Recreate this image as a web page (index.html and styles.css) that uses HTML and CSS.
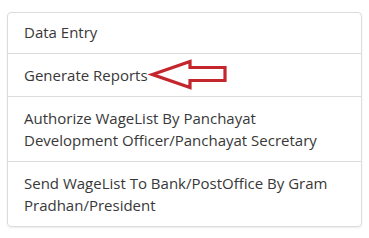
FILE: index.html
```html
<!DOCTYPE html>
<html>
<head>
<meta charset="utf-8">
<link rel="stylesheet" href="styles.css">
</head>
<body>
<div class="list">
  <div class="item">Data Entry</div>
  <div class="item item-mark">Generate Reports
    <svg class="arrow" width="80" height="34" viewBox="148 58 80 34">
      <path d="M152.5,74.5 L190,61.5 L190,67.5 L225,67.5 L225,80.5 L190,80.5 L190,87.5 Z" fill="#fff" stroke="#c4262e" stroke-width="3.2" stroke-linejoin="miter"/>
    </svg>
  </div>
  <div class="item item-2">Authorize WageList By Panchayat Development Officer/Panchayat Secretary</div>
  <div class="item item-2 item-last">Send WageList To Bank/PostOffice By Gram Pradhan/President</div>
</div>
</body>
</html>
```
FILE: styles.css
```css
html, body {
  margin: 0;
  background: #fff;
}
body {
  padding: 12px 7px;
  font-family: "Open Sans", "Noto Sans", sans-serif;
  font-size: 15px;
  color: #383838;
}
.list {
  width: 353px;
  border: 1px solid #dcdcdc;
  border-radius: 4px;
  box-shadow: 0 1px 2px rgba(0,0,0,0.08);
}
.item {
  position: relative;
  padding: 10px 16px;
  line-height: 21px;
  border-top: 1px solid #dcdcdc;
}
.item:first-child {
  border-top: none;
  padding-top: 9px;
}
.item-mark {
  padding-top: 11px;
}
.item-2 {
  line-height: 22px;
}
.arrow {
  position: absolute;
  left: 140px;
  top: 4px;
}
```
